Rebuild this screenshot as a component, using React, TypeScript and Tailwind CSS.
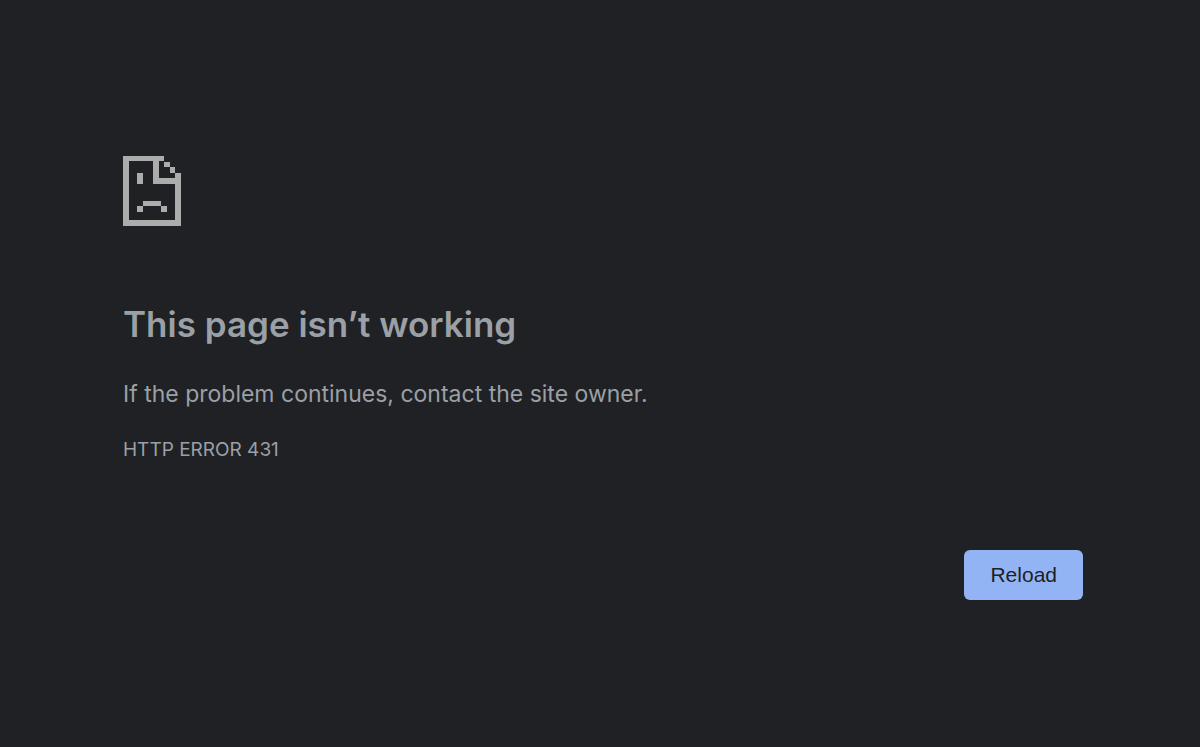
export default function App() {
  return (
    <div className="min-h-screen bg-[#202124] font-['Inter',sans-serif] text-[#9aa0a6]">
      <main className="pt-39 pr-[117px] pl-[123px]">
        <svg
          className="h-[70px] w-[58px]"
          viewBox="0 0 58 70"
          shapeRendering="crispEdges"
          fill="#acacac"
          aria-hidden="true"
        >
          <path d="M0 0H41V5H36V22H52V17H58V70H0ZM6 5V64H52V28H30V5Z" fillRule="evenodd" />
          <path d="M41 6h6v5h-6zM47 11h5v6h-5z" />
          <path d="M14 17h6v11h-6zM20 45h18v5h-18zM14 50h6v6h-6zM38 50h6v6h-6z" />
        </svg>
        <h1 className="mt-[74px] text-[35px] leading-12 font-semibold">This page isn’t working</h1>
        <p className="mt-7 text-[23px] leading-9">If the problem continues, contact the site owner.</p>
        <p className="mt-6 text-[19px] leading-7">HTTP ERROR 431</p>
        <div className="mt-[86px] flex justify-end">
          <button
            type="button"
            className="rounded-md bg-[#93b4f4] px-[26px] py-[9px] font-['Liberation_Sans',sans-serif] text-[21px] leading-8 text-[#202124]"
          >
            Reload
          </button>
        </div>
      </main>
    </div>
  );
}
